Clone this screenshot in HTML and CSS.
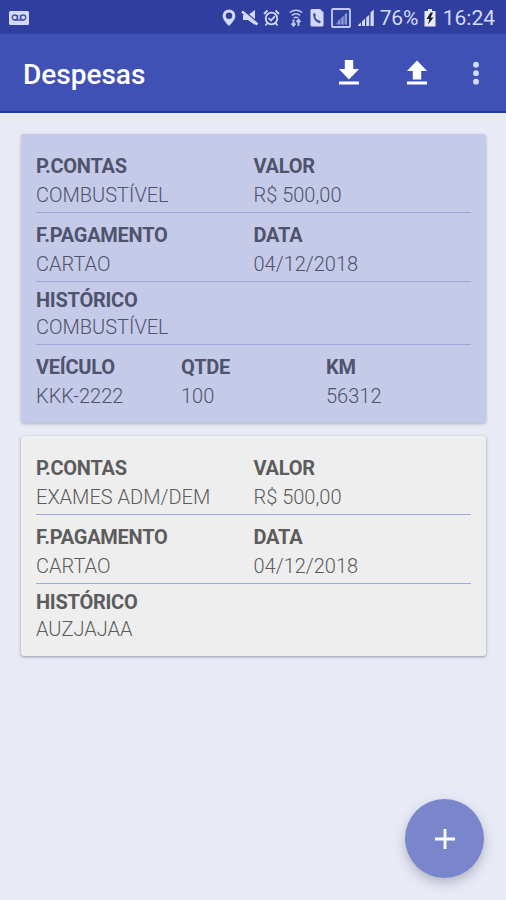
FILE: index.html
```html
<!DOCTYPE html>
<html lang="pt-BR">
<head>
    <meta charset="UTF-8">
    <meta name="viewport" content="width=device-width, initial-scale=1.0">
    <title>Despesas</title>
    <link rel="stylesheet" href="styles.css">
</head>
<body>
    <div class="status-bar">
        <svg class="voicemail" width="20" height="14" viewBox="0 0 20 14">
            <rect width="20" height="14" rx="1.5" fill="#d3daf8"/>
            <g fill="none" stroke="#4552a8" stroke-width="1.3">
                <circle cx="5.8" cy="6.5" r="2.5"/>
                <circle cx="14.2" cy="6.5" r="2.5"/>
                <path d="M5.8 9.2H14.2M8.6 4v5M11.4 4v5"/>
            </g>
        </svg>
        <div class="status-icons">
            <svg width="14" height="18" viewBox="0 0 14 18">
                <path fill="#d3daf8" fill-rule="evenodd" d="M7 .5a6.4 6.4 0 0 0-6.4 6.4C.6 11 7 17 7 17s6.4-6 6.4-10.1A6.4 6.4 0 0 0 7 .5zM7 3.5a3.2 3.2 0 1 1 0 6.4 3.2 3.2 0 0 1 0-6.4z"/>
            </svg>
            <svg class="mute" width="18" height="18" viewBox="0 0 18 18">
                <path fill="#d3daf8" d="M2 6h5l7-5v15l-7-5H2z"/>
                <path d="M0 .5l17 14" stroke="#303f9f" stroke-width="3"/>
                <path d="M1 2.5l15.500 13" stroke="#d3daf8" stroke-width="2.6"/>
            </svg>
            <svg width="17" height="18" viewBox="0 0 17 18">
                <g fill="none" stroke="#d3daf8" stroke-width="1.8">
                    <circle cx="8.5" cy="9.5" r="5.8"/>
                    <path d="M5.6 9l2.4 2.500 4-4.300M1 5l3.500-3.500M16 5l-3.500-3.500M4.500 14l-2 2.500M12.500 14l2 2.500"/>
                </g>
            </svg>
            <svg class="wifi" width="14" height="18" viewBox="0 0 14 18">
                <g fill="none" stroke="#c3cbf0" stroke-width="1.5">
                    <path d="M.8 3.5q6.2-4.500 12.400 0M2.800 6.300q4.200-3.200 8.400 0M4.800 9q2.200-1.600 4.400 0"/>
                    <path d="M4.500 10.500v6M2.500 14.500l2 2.300 2-2.300M9.500 17v-6M11.500 13l-2-2.300-2 2.300" stroke-width="1.8"/>
                </g>
            </svg>
            <svg class="sim" width="14" height="18" viewBox="0 0 14 18">
                <path fill="#d3daf8" d="M2 0h8l3.5 3.5V16q0 1.500-1.500 1.500H2Q.5 17.500.5 16V1.500Q.5 0 2 0z"/>
                <path fill="none" stroke="#4552a8" stroke-width="2" d="M4.300 5q-.5 6.500 6 8.500"/>
                <path stroke="#4552a8" stroke-width="2.6" d="M3.400 6l2-.8M8.400 13.500l1.200-1.900"/>
            </svg>
            <svg class="boxed" width="20" height="20" viewBox="0 0 20 20">
                <rect x="1" y="1" width="18" height="18" rx="1" fill="none" stroke="#c3cbf0" stroke-width="1.8"/>
                <path fill="#5d6bbd" d="M3.500 16.500L16 4.500v12z"/>
                <path fill="#8f9bd6" d="M7 16.500h2V11l-2 2zM10.500 16.500h2V8l-2 1.800zM14 16.500h2v-12l-2 2z"/>
            </svg>
            <svg class="signal" width="18" height="18" viewBox="0 0 18 18">
                <path fill="#d3daf8" d="M1 17h3v-3.500L1 16zM5 17h3V9.500L5 12.500zM9.200 17h3V6l-3 2.500zM13.500 17h3.300V.5l-3.300 3z"/>
            </svg>
            <span class="battery-text">76%</span>
            <svg class="battery" width="12" height="18" viewBox="0 0 12 18">
                <path fill="#e8ebf6" d="M4 0h4v2h3.500v15.500H.5V2H4z"/>
                <path fill="#1c2230" d="M6.500 3.500L2.500 10h2.800L4 15.500 9.500 8.500H6.700L9 3.500z"/>
            </svg>
            <span class="clock">16:24</span>
        </div>
    </div>

    <header class="toolbar">
        <h1>Despesas</h1>
        <div class="actions">
            <svg width="22" height="26" viewBox="0 0 22 26">
                <path fill="#fff" d="M6.800 0h8.400v9H21L11 19.500 1 9h5.800zM1 21.500h20v3H1z"/>
            </svg>
            <svg width="22" height="26" viewBox="0 0 22 26">
                <path fill="#fff" d="M11 .5L21 11h-5.800v8.500H6.800V11H1zM1 21.500h20v3H1z"/>
            </svg>
            <svg class="more" width="8" height="26" viewBox="0 0 8 26">
                <g fill="#d3defa">
                    <circle cx="4" cy="4.7" r="2.9"/>
                    <circle cx="4" cy="13.2" r="2.9"/>
                    <circle cx="4" cy="21.7" r="2.9"/>
                </g>
            </svg>
        </div>
    </header>

    <main class="list">
        <div class="card selected">
            <div class="row two">
                <div><b>P.CONTAS</b><span>COMBUSTÍVEL</span></div>
                <div><b>VALOR</b><span>R$ 500,00</span></div>
            </div>
            <div class="row two">
                <div><b>F.PAGAMENTO</b><span>CARTAO</span></div>
                <div><b>DATA</b><span>04/12/2018</span></div>
            </div>
            <div class="row compact">
                <div><b>HISTÓRICO</b><span>COMBUSTÍVEL</span></div>
            </div>
            <div class="row three">
                <div><b>VEÍCULO</b><span>KKK-2222</span></div>
                <div><b>QTDE</b><span>100</span></div>
                <div><b>KM</b><span>56312</span></div>
            </div>
        </div>

        <div class="card">
            <div class="row two">
                <div><b>P.CONTAS</b><span>EXAMES ADM/DEM</span></div>
                <div><b>VALOR</b><span>R$ 500,00</span></div>
            </div>
            <div class="row two">
                <div><b>F.PAGAMENTO</b><span>CARTAO</span></div>
                <div><b>DATA</b><span>04/12/2018</span></div>
            </div>
            <div class="row compact">
                <div><b>HISTÓRICO</b><span>AUZJAJAA</span></div>
            </div>
        </div>
    </main>

    <button class="fab" aria-label="Adicionar">
        <svg width="20" height="20" viewBox="0 0 20 20">
            <path d="M10 0v20M0 10h20" stroke="#fff" stroke-width="2.8"/>
        </svg>
    </button>
</body>
</html>
```
FILE: styles.css
```css
* {
    margin: 0;
    padding: 0;
    box-sizing: border-box;
}

body {
    height: 100vh;
    overflow: hidden;
    background: #e8eaf6;
    font-family: Roboto, sans-serif;
}

svg {
    display: block;
    flex-shrink: 0;
}

.status-bar {
    display: flex;
    justify-content: space-between;
    align-items: center;
    height: 34px;
    padding: 1px 11px 0 9px;
    background: #303f9f;
    color: #d3daf8;
    font-size: 21px;
}

.status-icons {
    display: flex;
    align-items: center;
}

.status-icons svg {
    margin-right: 5px;
}

.status-icons .mute {
    margin-right: 4px;
}

.status-icons .wifi {
    margin-left: 4px;
    margin-right: 7px;
}

.status-icons .sim {
    margin-right: 7px;
}

.status-icons .boxed {
    margin-right: 6px;
}

.status-icons .battery {
    margin-right: 7px;
}

.battery-text {
    width: 44px;
    letter-spacing: -0.2px;
}

.toolbar {
    display: flex;
    justify-content: space-between;
    align-items: center;
    height: 79px;
    padding: 4px 26px 0 23px;
    background: #3f51b5;
    border-bottom: 2px solid #1e3c98;
}

h1 {
    color: #fff;
    font-size: 28px;
    font-weight: 500;
}

.actions {
    display: flex;
    align-items: center;
    gap: 46px;
    padding-bottom: 4px;
}

.actions .more {
    margin-left: -2px;
}

.list {
    display: flex;
    flex-direction: column;
    gap: 13px;
    padding: 21px 20px 0 21px;
}

.card {
    padding: 10px 15px;
    background: #eee;
    border-radius: 3px;
    box-shadow: 0 1px 3px rgba(40, 45, 70, 0.45);
    color: #5c5c5c;
    font-size: 20px;
}

.selected {
    background: #c5cae9;
    color: #4f536c;
    box-shadow: 0 1px 3px rgba(70, 80, 100, 0.35);
}

.row {
    display: grid;
    padding: 8px 0 2px;
    border-bottom: 1px solid #9fa8da;
}

.row:last-child {
    border-bottom: none;
}

.two {
    grid-template-columns: 1fr 1fr;
}

.three {
    grid-template-columns: 1fr 1fr 1fr;
}

.row b,
.row span {
    display: block;
    white-space: nowrap;
}

.row b {
    line-height: 28px;
    font-weight: 700;
    letter-spacing: -0.25px;
}

.row span {
    line-height: 30px;
    font-weight: 300;
}

.compact {
    padding: 5px 0 3px;
}

.compact b,
.compact span {
    line-height: 27px;
}

.fab {
    position: fixed;
    right: 22px;
    bottom: 22px;
    display: flex;
    justify-content: center;
    align-items: center;
    width: 79px;
    height: 79px;
    border: none;
    border-radius: 50%;
    background: #7986cb;
    box-shadow: 0 5px 12px rgba(60, 60, 80, 0.3);
}
```
